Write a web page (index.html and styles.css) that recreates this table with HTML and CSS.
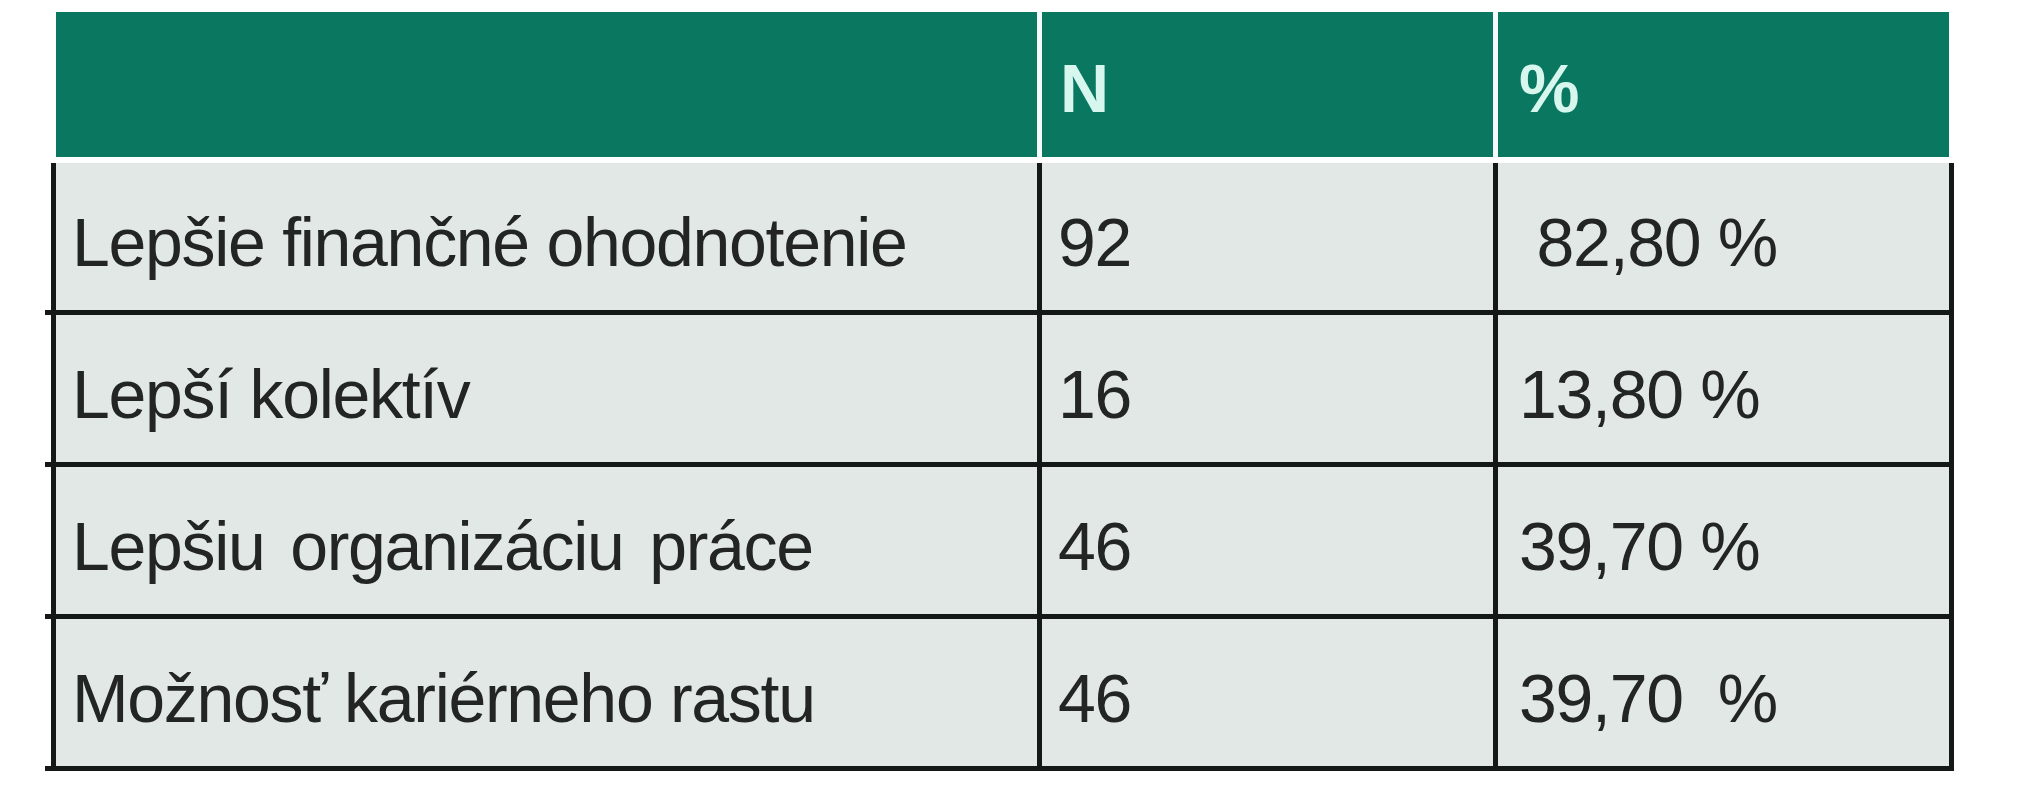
FILE: index.html
```html
<!DOCTYPE html>
<html lang="sk">
<head>
<meta charset="utf-8">
<title>Tabuľka</title>
<link rel="stylesheet" href="styles.css">
</head>
<body>
<div class="tbl">
  <div class="head">
    <div class="hc c1"></div>
    <div class="hc c2">N</div>
    <div class="hc c3">%</div>
  </div>
  <div class="row">
    <div class="cell c1">Lepšie finančné ohodnotenie</div>
    <div class="cell c2">92</div>
    <div class="cell c3"> 82,80 %</div>
  </div>
  <div class="row">
    <div class="cell c1">Lepší kolektív</div>
    <div class="cell c2">16</div>
    <div class="cell c3">13,80 %</div>
  </div>
  <div class="row">
    <div class="cell c1 wide">Lepšiu organizáciu práce</div>
    <div class="cell c2">46</div>
    <div class="cell c3">39,70 %</div>
  </div>
  <div class="row">
    <div class="cell c1">Možnosť kariérneho rastu</div>
    <div class="cell c2">46</div>
    <div class="cell c3">39,70  %</div>
  </div>
</div>
</body>
</html>
```
FILE: styles.css
```css
html, body {
  margin: 0;
  padding: 0;
  background: #ffffff;
}
body {
  font-family: "Liberation Sans", Arial, sans-serif;
}
.tbl {
  margin: 12px 0 0 51px;
  width: 1903px;
}
.head {
  display: grid;
  grid-template-columns: 981px 451px 451px;
  column-gap: 5px;
  margin-left: 5px;
  width: 1893px;
  background: #f4fbfa;
  margin-bottom: 6px;
}
.hc {
  background: #0a7761;
  height: 145px;
  box-sizing: border-box;
  padding-top: 42px;
  font-size: 68px;
  line-height: 68px;
  font-weight: bold;
  color: #d6f6ee;
}
.row {
  position: relative;
  display: grid;
  grid-template-columns: 981px 451px 451px;
  column-gap: 5px;
  background: #141917;
  border: 5px solid #141917;
  border-top: none;
}
.row::after {
  content: "";
  position: absolute;
  left: -11px;
  bottom: -5px;
  width: 6px;
  height: 5px;
  background: #141917;
}
.cell {
  background: #e2e8e5;
  height: 147px;
  box-sizing: border-box;
  padding-top: 45px;
  font-size: 68px;
  line-height: 68px;
  letter-spacing: -1.3px;
  color: #222524;
  white-space: pre;
}
.cell.wide {
  word-spacing: 8px;
}
.c1, .c2 {
  padding-left: 16px;
}
.hc.c2 {
  padding-left: 18px;
}
.c3 {
  padding-left: 21px;
}
```
